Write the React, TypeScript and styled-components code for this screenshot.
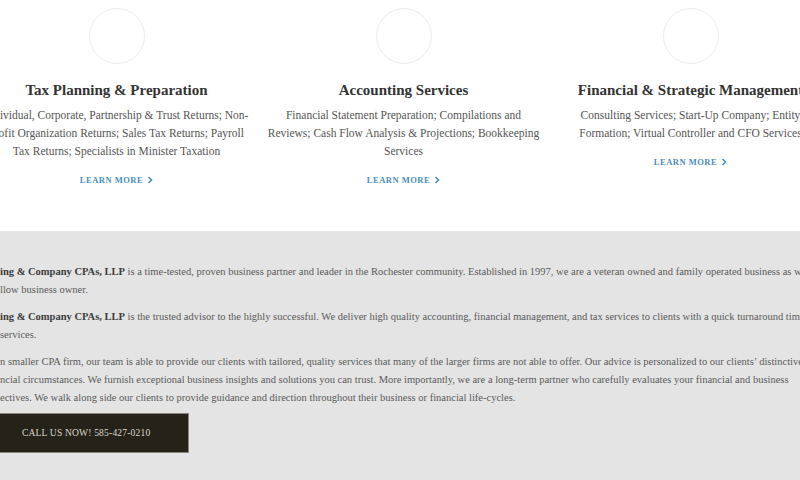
import React from 'react';
import styled, { createGlobalStyle } from 'styled-components';

const GlobalStyle = createGlobalStyle`
  html, body {
    margin: 0;
    padding: 0;
    background: #ffffff;
    overflow: hidden;
  }
  body {
    font-family: "Liberation Serif", "DejaVu Serif", serif;
  }
`;

const Page = styled.div`
  width: 800px;
  height: 480px;
  overflow: hidden;
  display: flex;
  flex-direction: column;
`;

const Services = styled.section`
  display: grid;
  grid-template-columns: repeat(3, 287px);
  margin-left: -27px;
  padding-top: 8px;
  height: 231px;
  flex-shrink: 0;
  box-sizing: border-box;
`;

const Card = styled.div`
  display: flex;
  flex-direction: column;
  align-items: center;
  text-align: center;
`;

const Circle = styled.div`
  width: 56px;
  height: 56px;
  border-radius: 50%;
  border: 1.5px solid #ececec;
  box-sizing: border-box;
`;

const Title = styled.h3`
  margin: 16px 0 0;
  font-size: 15px;
  line-height: 20px;
  font-weight: 700;
  color: #333333;
  white-space: nowrap;
`;

const Desc = styled.p`
  margin: 6px 0 0;
  font-size: 11.5px;
  line-height: 18px;
  color: #555555;
  white-space: nowrap;
`;

const More = styled.a`
  margin-top: 14px;
  display: flex;
  align-items: center;
  gap: 4px;
  font-size: 8.5px;
  line-height: 12px;
  letter-spacing: 0.5px;
  font-weight: 700;
  color: #4b8dbd;
  text-decoration: none;
`;

const About = styled.section`
  flex: 1;
  background: #e4e4e4;
  padding-top: 32px;
`;

const Para = styled.p`
  margin: 0 0 9px;
  font-size: 10.5px;
  line-height: 18px;
  color: #5a5a5a;
  white-space: nowrap;
`;

const Strong = styled.b`
  color: #3c3c3c;
`;

const CallButton = styled.a`
  display: inline-block;
  margin: -3px 0 0 -16px;
  padding: 0 38px;
  height: 38px;
  line-height: 38px;
  background: #25221a;
  border: 1px solid #8a8577;
  border-left: none;
  color: #dcd8cc;
  font-size: 9.5px;
  letter-spacing: 0.2px;
  text-decoration: none;
`;

const Chevron = () => (
  <svg width="6" height="8" viewBox="0 0 6 8">
    <path d="M1.5 1 L4.5 4 L1.5 7" fill="none" stroke="#4b8dbd" strokeWidth="1.6" />
  </svg>
);

const services = [
  {
    title: 'Tax Planning & Preparation',
    lines: [
      'Individual, Corporate, Partnership & Trust Returns; Non-',
      'profit Organization Returns; Sales Tax Returns; Payroll',
      'Tax Returns; Specialists in Minister Taxation',
    ],
  },
  {
    title: 'Accounting Services',
    lines: [
      'Financial Statement Preparation; Compilations and',
      'Reviews; Cash Flow Analysis & Projections; Bookkeeping',
      'Services',
    ],
  },
  {
    title: 'Financial & Strategic Management',
    lines: [
      'Consulting Services; Start-Up Company; Entity',
      'Formation; Virtual Controller and CFO Services',
    ],
  },
];

const App: React.FC = () => {
  return (
    <Page>
      <GlobalStyle />
      <Services>
        {services.map(service => (
          <Card key={service.title}>
            <Circle />
            <Title>{service.title}</Title>
            <Desc>
              {service.lines.map((line, i) => (
                <React.Fragment key={i}>
                  {line}
                  {i < service.lines.length - 1 && <br />}
                </React.Fragment>
              ))}
            </Desc>
            <More href="#">
              LEARN MORE <Chevron />
            </More>
          </Card>
        ))}
      </Services>
      <About>
        <Para>
          <Strong>ing &amp; Company CPAs, LLP</Strong> is a time-tested, proven business partner and leader in the Rochester community. Established in 1997, we are a veteran owned and family operated business as well
          <br />
          llow business owner.
        </Para>
        <Para>
          <Strong>ing &amp; Company CPAs, LLP</Strong> is the trusted advisor to the highly successful. We deliver high quality accounting, financial management, and tax services to clients with a quick turnaround time
          <br />
          services.
        </Para>
        <Para>
          n smaller CPA firm, our team is able to provide our clients with tailored, quality services that many of the larger firms are not able to offer. Our advice is personalized to our clients’ distinctive
          <br />
          ncial circumstances. We furnish exceptional business insights and solutions you can trust. More importantly, we are a long-term partner who carefully evaluates your financial and business
          <br />
          ectives. We walk along side our clients to provide guidance and direction throughout their business or financial life-cycles.
        </Para>
        <CallButton href="#">CALL US NOW! 585-427-0210</CallButton>
      </About>
    </Page>
  );
};

export default App;
